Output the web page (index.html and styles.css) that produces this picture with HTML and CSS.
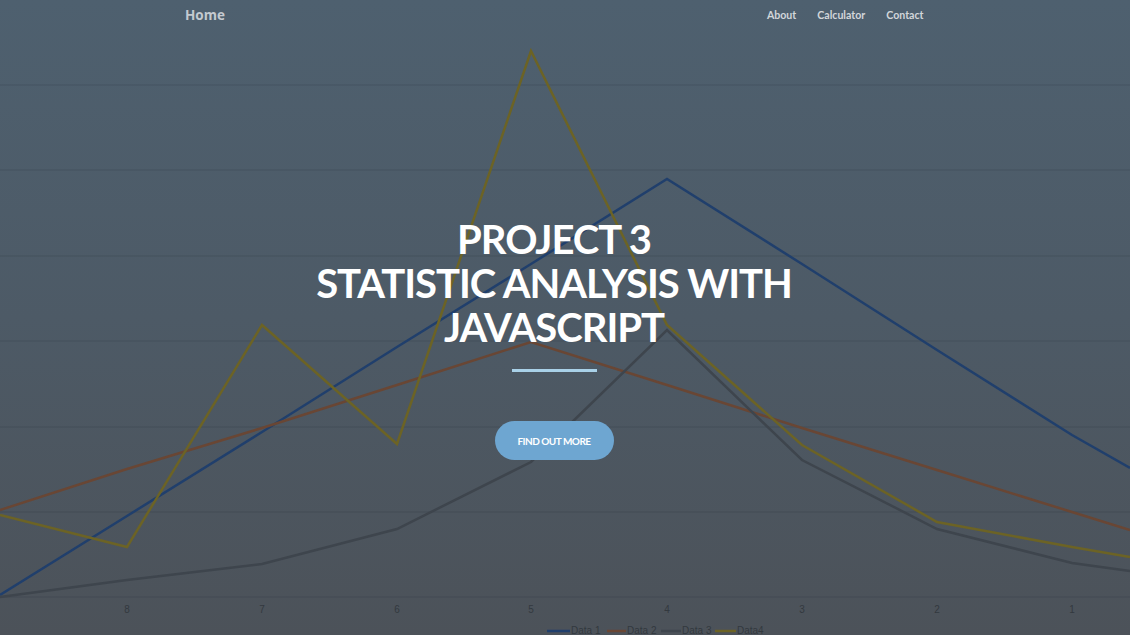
FILE: index.html
```html
<!DOCTYPE html>
<html lang="en">
<head>
<meta charset="utf-8">
<title>Project 3</title>
<link rel="stylesheet" href="styles.css">
</head>
<body>
<div class="page">
  <svg class="chart" viewBox="0 0 1130 635" preserveAspectRatio="none" xmlns="http://www.w3.org/2000/svg">
    <g class="grid">
      <line x1="0" y1="85" x2="1130" y2="85"/>
      <line x1="0" y1="170" x2="1130" y2="170"/>
      <line x1="0" y1="256" x2="1130" y2="256"/>
      <line x1="0" y1="341" x2="1130" y2="341"/>
      <line x1="0" y1="427" x2="1130" y2="427"/>
      <line x1="0" y1="512" x2="1130" y2="512"/>
      <line x1="0" y1="597" x2="1130" y2="597"/>
    </g>
    <polyline class="s-blue" points="0,595 127,516 262,432 397,347 531,264 667,179 802,264 937,350 1072,435 1130,468"/>
    <polyline class="s-brown" points="0,510 127,469 262,428 397,385 531,342 667,385 802,428 937,470 1072,512 1130,530"/>
    <polyline class="s-grey" points="0,597 127,580 262,564 397,529 531,462 667,330 802,460 937,529 1072,563 1130,571"/>
    <polyline class="s-yellow" points="0,515 127,547 262,325 397,444 531,51 667,325 802,445 937,522 1072,547 1130,557"/>
    <g class="ticks">
      <text x="127" y="613">8</text>
      <text x="262" y="613">7</text>
      <text x="397" y="613">6</text>
      <text x="531" y="613">5</text>
      <text x="667" y="613">4</text>
      <text x="802" y="613">3</text>
      <text x="937" y="613">2</text>
      <text x="1072" y="613">1</text>
    </g>
    <g class="legend">
      <line class="s-blue" x1="547" y1="631" x2="570" y2="631"/>
      <text x="571" y="634">Data 1</text>
      <line class="s-brown" x1="607" y1="631" x2="626" y2="631"/>
      <text x="627" y="634">Data 2</text>
      <line class="s-grey" x1="661" y1="631" x2="681" y2="631"/>
      <text x="682" y="634">Data 3</text>
      <line class="s-yellow" x1="715" y1="631" x2="736" y2="631"/>
      <text x="737" y="634">Data4</text>
    </g>
  </svg>

  <nav class="nav">
    <a class="brand" href="#">Home</a>
    <ul class="links">
      <li><a href="#">About</a></li>
      <li><a href="#">Calculator</a></li>
      <li><a href="#">Contact</a></li>
    </ul>
  </nav>

  <header class="hero">
    <h1 class="title">PROJECT 3<br>STATISTIC ANALYSIS WITH<br>JAVASCRIPT</h1>
    <hr class="divider">
    <a class="btn" href="#">FIND OUT MORE</a>
  </header>
</div>
</body>
</html>
```

FILE: styles.css
```css
* { box-sizing: border-box; }

html, body {
  margin: 0;
  padding: 0;
}

body {
  font-family: Lato, "Open Sans", sans-serif;
  background: #4e5861;
}

.page {
  position: relative;
  width: 100%;
  height: 635px;
  overflow: hidden;
  background: linear-gradient(to bottom, #4e606f 0%, #4d5a66 50%, #4c5259 100%);
}

.chart {
  position: absolute;
  left: 0;
  top: 0;
  width: 100%;
  height: 100%;
}

.grid line {
  stroke: rgba(30, 40, 50, 0.2);
  stroke-width: 1;
}

.chart polyline,
.legend line {
  fill: none;
  stroke-width: 2.5;
  stroke-linejoin: miter;
}

.s-blue { stroke: #203f6c; }
.s-brown { stroke: #694634; }
.s-grey { stroke: #3e454d; }
.s-yellow { stroke: #6c6325; }

.ticks text {
  font-family: "Liberation Sans", sans-serif;
  font-size: 10px;
  fill: #33393f;
  text-anchor: middle;
}

.legend text {
  font-family: "Liberation Sans", sans-serif;
  font-size: 10px;
  fill: #33393f;
}

.nav {
  position: relative;
  display: flex;
  align-items: center;
  justify-content: space-between;
  width: 760px;
  height: 29px;
  margin: 0 auto;
}

.brand {
  color: #c4cad0;
  font-family: "Open Sans", sans-serif;
  font-weight: 700;
  font-size: 13.5px;
  text-decoration: none;
}

.links {
  display: flex;
  list-style: none;
  margin: 0 11px 0 0;
  padding: 0;
}

.links a {
  display: block;
  padding: 0 10.5px;
  color: #d2d6da;
  font-family: Lato, sans-serif;
  font-weight: 700;
  font-size: 10.6px;
  text-decoration: none;
}

.hero {
  position: relative;
  display: flex;
  flex-direction: column;
  align-items: center;
  padding: 188px 22px 0 0;
}

.title {
  margin: 0;
  color: #ffffff;
  font-family: Lato, sans-serif;
  font-weight: 700;
  font-size: 40px;
  line-height: 44px;
  text-align: center;
  letter-spacing: -1px;
}

.divider {
  width: 85px;
  margin: 20px 0 0;
  border: 0;
  border-top: 3px solid #a9d1e8;
}

.btn {
  display: flex;
  align-items: center;
  justify-content: center;
  width: 119px;
  height: 39px;
  margin-top: 49px;
  border-radius: 20px;
  background: #6ea6d1;
  color: #ffffff;
  font-family: Lato, sans-serif;
  font-weight: 700;
  font-size: 10px;
  letter-spacing: -0.5px;
  text-decoration: none;
}
```
